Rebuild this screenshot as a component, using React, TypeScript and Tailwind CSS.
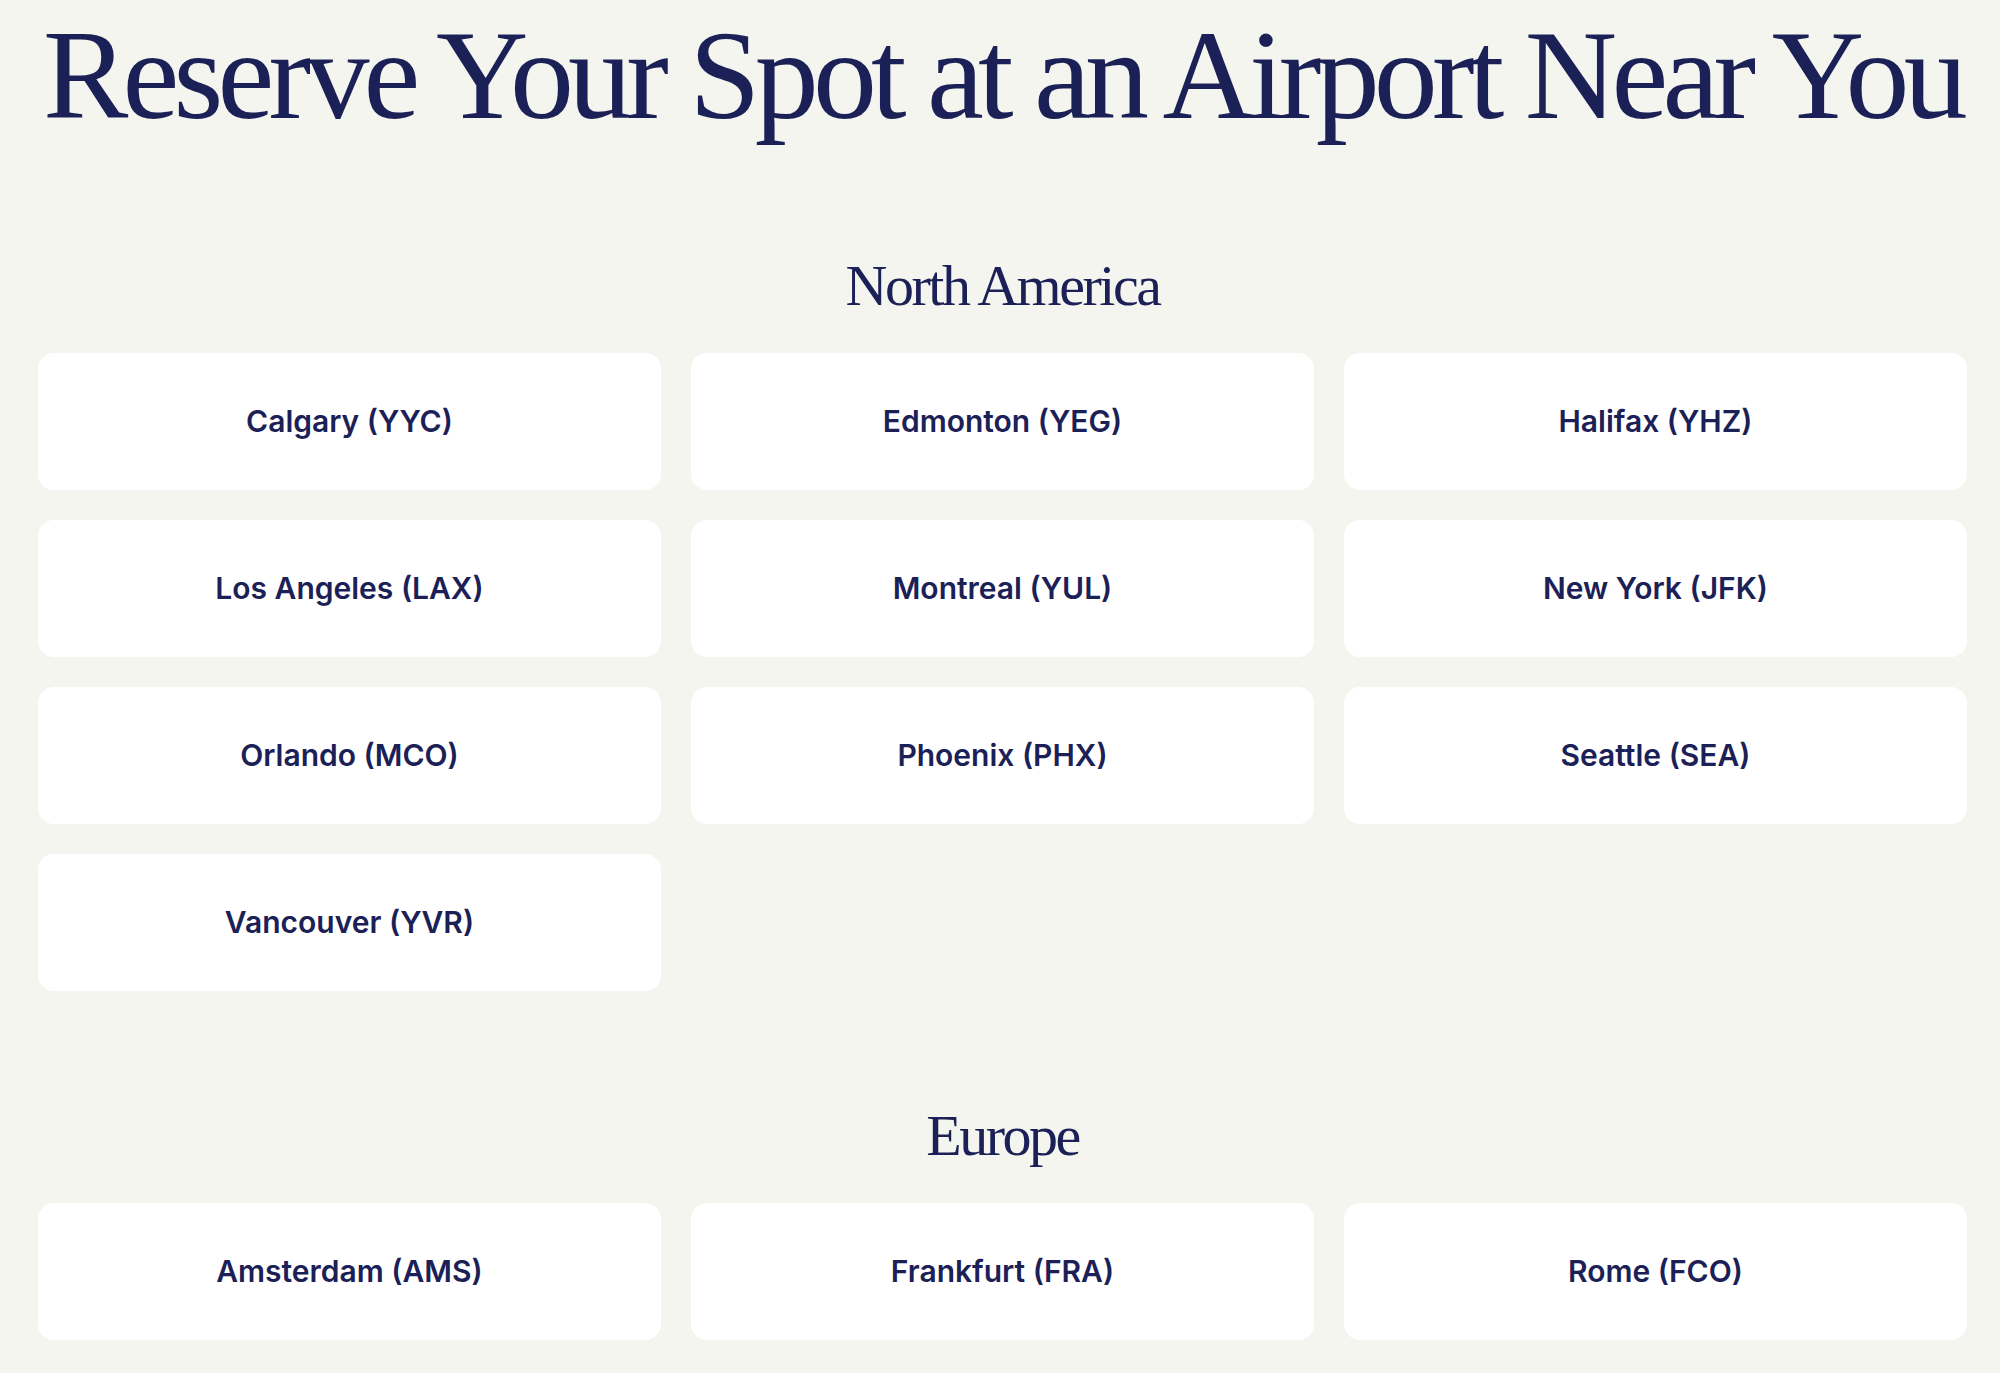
import React from "react";

const regions = [
  {
    name: "North America",
    airports: [
      "Calgary (YYC)",
      "Edmonton (YEG)",
      "Halifax (YHZ)",
      "Los Angeles (LAX)",
      "Montreal (YUL)",
      "New York (JFK)",
      "Orlando (MCO)",
      "Phoenix (PHX)",
      "Seattle (SEA)",
      "Vancouver (YVR)",
    ],
  },
  {
    name: "Europe",
    airports: ["Amsterdam (AMS)", "Frankfurt (FRA)", "Rome (FCO)"],
  },
];

function AirportCard({ label }: { label: string }) {
  return (
    <a
      href="#"
      className="flex h-[137px] items-center justify-center rounded-2xl bg-white text-[30px] font-semibold text-[#1b2156] [font-family:Inter,'Noto_Sans',sans-serif]"
    >
      {label}
    </a>
  );
}

export default function App() {
  return (
    <div className="min-h-screen overflow-hidden bg-[#f5f5f0]">
      <div className="ml-[38px] w-[1929px] pt-[11px] pb-[37px]">
        <h1 className="whitespace-nowrap text-center text-[128px] leading-none font-normal tracking-[-5.8px] text-[#1b2156] [font-family:'Liberation_Serif',serif]">
          Reserve Your Spot at an Airport Near You
        </h1>

        {regions.map((region, i) => (
          <section key={region.name} className={i === 0 ? "mt-[118px]" : "mt-[116px]"}>
            <h2 className="text-center text-[58px] leading-none font-normal tracking-[-2.5px] text-[#1b2156] [font-family:'Liberation_Serif',serif]">
              {region.name}
            </h2>
            <div className="mt-[38px] grid grid-cols-3 gap-[30px]">
              {region.airports.map((airport) => (
                <AirportCard key={airport} label={airport} />
              ))}
            </div>
          </section>
        ))}
      </div>
    </div>
  );
}
